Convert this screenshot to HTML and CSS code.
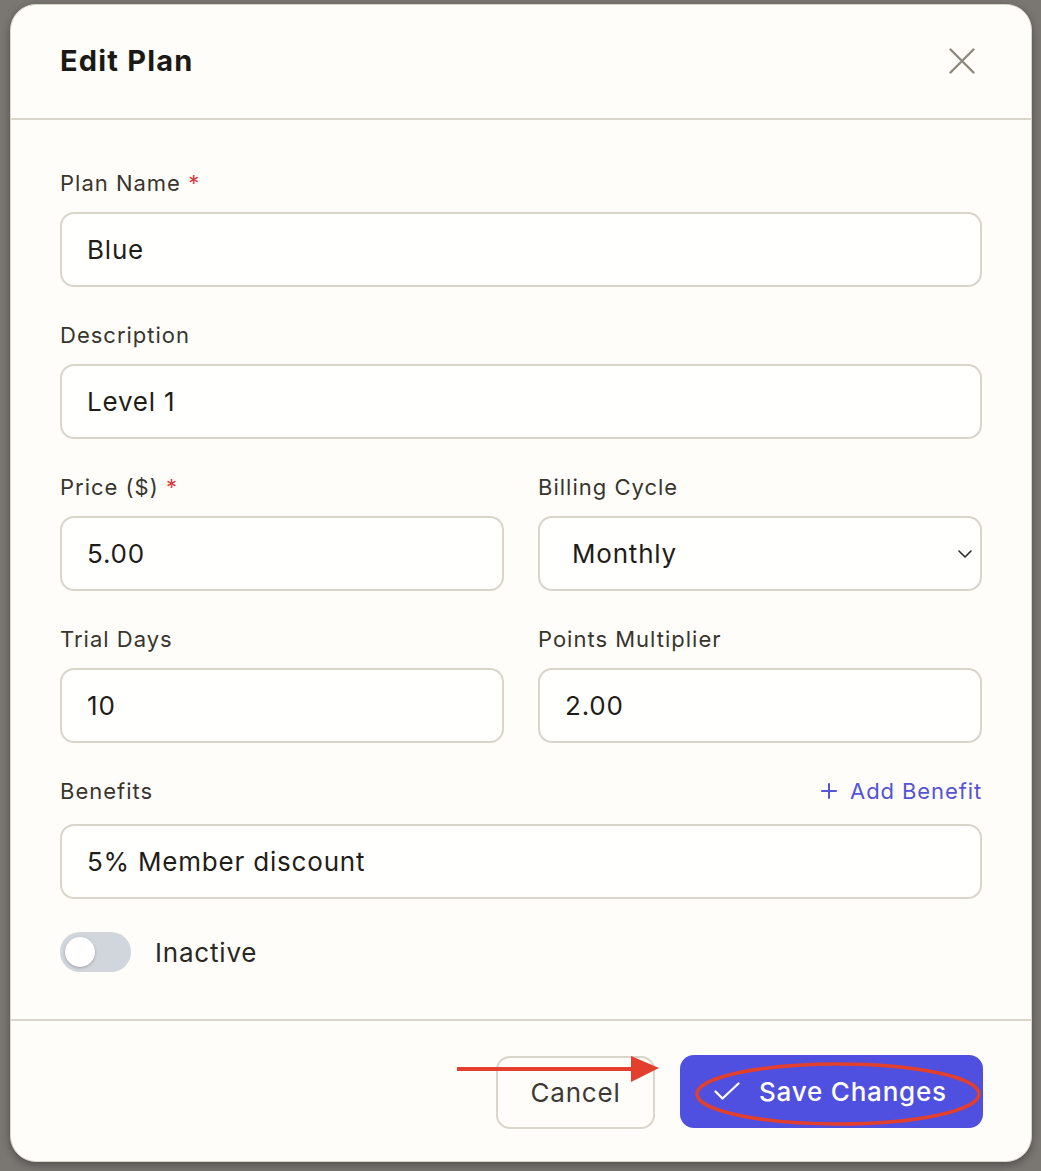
FILE: index.html
```html
<!DOCTYPE html>
<html lang="en">
<head>
    <meta charset="UTF-8">
    <meta name="viewport" content="width=device-width, initial-scale=1.0">
    <title>Edit Plan</title>
    <link rel="stylesheet" href="styles.css">
</head>
<body>
    <div class="modal">
        <div class="modal-header">
            <h2>Edit Plan</h2>
            <button type="button" class="close-btn" aria-label="Close">
                <svg width="26" height="26" viewBox="0 0 26 26" fill="none" stroke="currentColor" stroke-width="2.4" stroke-linecap="round">
                    <path d="M1.5 1.5l23 23M24.5 1.5l-23 23"/>
                </svg>
            </button>
        </div>

        <form class="modal-body">
            <div class="form-group">
                <label for="planName">Plan Name <span class="required">*</span></label>
                <input type="text" id="planName" value="Blue">
            </div>

            <div class="form-group">
                <label for="description">Description</label>
                <input type="text" id="description" value="Level 1">
            </div>

            <div class="form-row">
                <div class="form-group">
                    <label for="price">Price ($) <span class="required">*</span></label>
                    <input type="text" id="price" value="5.00">
                </div>
                <div class="form-group">
                    <label for="billingCycle">Billing Cycle</label>
                    <div class="select-wrap">
                        <select id="billingCycle">
                            <option>Monthly</option>
                            <option>Yearly</option>
                        </select>
                        <svg class="chevron" width="16" height="10" viewBox="0 0 16 10" fill="none" stroke="currentColor" stroke-width="1.6" stroke-linecap="round" stroke-linejoin="round">
                            <path d="M2 2l6 6 6-6"/>
                        </svg>
                    </div>
                </div>
            </div>

            <div class="form-row">
                <div class="form-group">
                    <label for="trialDays">Trial Days</label>
                    <input type="text" id="trialDays" value="10">
                </div>
                <div class="form-group">
                    <label for="multiplier">Points Multiplier</label>
                    <input type="text" id="multiplier" value="2.00">
                </div>
            </div>

            <div class="form-group">
                <div class="benefits-head">
                    <label for="benefit1">Benefits</label>
                    <a href="#" class="add-link">
                        <svg width="16" height="16" viewBox="0 0 16 16" fill="none" stroke="currentColor" stroke-width="2" stroke-linecap="round">
                            <path d="M8 1v14M1 8h14"/>
                        </svg>
                        Add Benefit
                    </a>
                </div>
                <input type="text" id="benefit1" value="5% Member discount">
            </div>

            <div class="toggle-row">
                <span class="toggle"><span class="knob"></span></span>
                <span class="toggle-label">Inactive</span>
            </div>
        </form>

        <div class="modal-footer">
            <button type="button" class="btn btn-cancel">Cancel</button>
            <button type="button" class="btn btn-save">
                <svg width="26" height="18" viewBox="0 0 26 18" fill="none" stroke="currentColor" stroke-width="2.2" stroke-linecap="round" stroke-linejoin="round">
                    <path d="M1.5 9.5l7 7L24.5 1.5"/>
                </svg>
                Save Changes
            </button>
        </div>

        <!-- red markup drawn on top of the footer -->
        <svg class="markup" width="1022" height="1158" viewBox="0 0 1022 1158">
            <line x1="446" y1="1064" x2="624" y2="1064" stroke="#e2402c" stroke-width="4"/>
            <polygon points="620,1051 648,1063 620,1077" fill="#e2402c"/>
            <ellipse cx="827" cy="1089" rx="141" ry="30" fill="none" stroke="#e2402c" stroke-width="3.5"/>
        </svg>
    </div>
</body>
</html>
```

FILE: styles.css
```css
* {
    margin: 0;
    padding: 0;
    box-sizing: border-box;
    font-family: Inter, 'Noto Sans', sans-serif;
}

body {
    background: #7a7773;
    padding: 4px 0 0 10px;
    min-height: 100vh;
}

.modal {
    position: relative;
    width: 1022px;
    height: 1158px;
    background: #fefdf9;
    border-radius: 26px;
    border: 1px solid #d9d5cb;
    box-shadow: 0 3px 8px rgba(0, 0, 0, 0.35);
    display: flex;
    flex-direction: column;
}

.modal-header {
    height: 115px;
    padding: 0 49px;
    display: flex;
    align-items: center;
    justify-content: space-between;
    border-bottom: 2px solid #d9d5cb;
}

.modal-header h2 {
    font-size: 29px;
    font-weight: 700;
    color: #1b1916;
    letter-spacing: 1.2px;
    margin-top: -2px;
}

.close-btn {
    background: none;
    border: none;
    color: #8c897f;
    display: flex;
    margin-right: 7px;
    margin-top: -2px;
    cursor: pointer;
}

.modal-body {
    flex: 1;
    padding: 49px 49px 0;
    display: flex;
    flex-direction: column;
    gap: 34px;
}

.form-row {
    display: grid;
    grid-template-columns: 1fr 1fr;
    gap: 34px;
}

.form-group label {
    display: block;
    font-size: 22px;
    line-height: 28px;
    font-weight: 400;
    color: #38352f;
    letter-spacing: 1px;
    margin-bottom: 15px;
}

.required {
    color: #dc3b3b;
}

input[type="text"],
select {
    width: 100%;
    height: 75px;
    padding: 0 25px;
    border: 2px solid #d9d5cb;
    border-radius: 14px;
    background: #fffffe;
    font-size: 26px;
    letter-spacing: 0.8px;
    color: #1f1d1a;
    outline: none;
}

.select-wrap {
    position: relative;
}

select {
    appearance: none;
    -webkit-appearance: none;
    padding-left: 32px;
}

.chevron {
    position: absolute;
    right: 9px;
    top: 33px;
    color: #2a2825;
    pointer-events: none;
}

.benefits-head {
    display: flex;
    justify-content: space-between;
    align-items: baseline;
    margin-bottom: 19px;
}

.benefits-head label {
    margin-bottom: 0;
}

.add-link {
    display: flex;
    align-items: center;
    gap: 13px;
    font-size: 22px;
    color: #5553d6;
    text-decoration: none;
    letter-spacing: 0.9px;
}

.toggle-row {
    display: flex;
    align-items: center;
    gap: 24px;
    margin-top: -1px;
}

.toggle {
    width: 71px;
    height: 40px;
    border-radius: 20px;
    background: #d1d5dc;
    display: flex;
    align-items: center;
    padding-left: 5px;
}

.knob {
    width: 30px;
    height: 30px;
    border-radius: 50%;
    background: #fff;
    box-shadow: 0 1px 3px rgba(0, 0, 0, 0.25);
}

.toggle-label {
    font-size: 26px;
    letter-spacing: 0.8px;
    color: #2a2825;
}

.modal-footer {
    height: 142px;
    border-top: 2px solid #d9d5cb;
    padding: 0 48px 0 0;
    display: flex;
    align-items: center;
    justify-content: flex-end;
    gap: 25px;
}

.btn {
    height: 73px;
    border-radius: 14px;
    font-size: 26px;
    letter-spacing: 0.8px;
    display: flex;
    align-items: center;
    cursor: pointer;
}

.btn-cancel {
    width: 159px;
    justify-content: center;
    background: #fefdf9;
    border: 2px solid #d9d5cb;
    color: #3d3a36;
    margin-top: 2px;
}

.btn-save {
    width: 303px;
    padding-left: 34px;
    gap: 19px;
    background: #5050e0;
    border: none;
    color: #fff;
    font-weight: 500;
}

.markup {
    position: absolute;
    left: 0;
    top: 0;
    pointer-events: none;
}
```
